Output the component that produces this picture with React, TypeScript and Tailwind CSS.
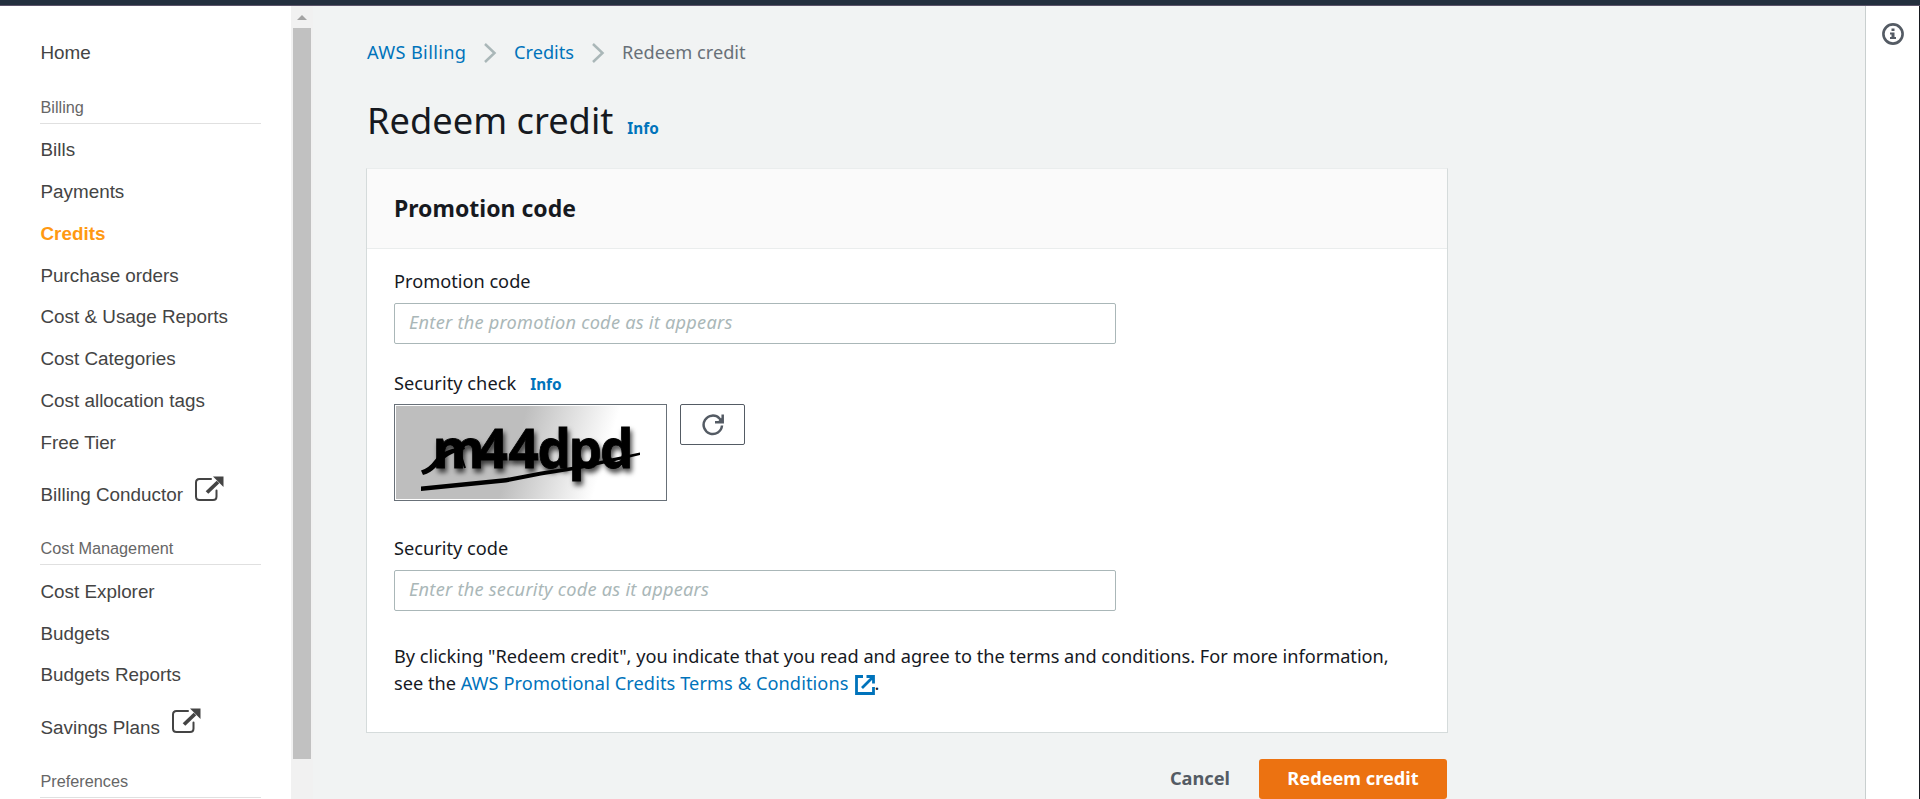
import React from "react";

const ember = "font-['Noto_Sans','Open_Sans',sans-serif]";

function NavExternal() {
  return (
    <svg className="ml-[11.5px] mt-[3px] h-[26px] w-[30px] shrink-0" viewBox="0 0 30 26" fill="none">
      <path d="M17 3H5.500Q2 3 2 6.500V20.500Q2 24 5.500 24H19Q22.500 24 22.500 20.500V14.500" stroke="#444" strokeWidth="2" strokeLinecap="round" />
      <path d="M13 16.500L24 6" stroke="#444" strokeWidth="3.800" />
      <path d="M19 0.500H29.500V11Z" fill="#444" />
    </svg>
  );
}

function NavItem({ label, active, external }: { label: string; active?: boolean; external?: boolean }) {
  if (external) {
    return (
      <a className="flex h-[67.5px] items-start pl-[0.5px] pt-[9px] text-[18.85px] leading-6 text-[#444]">
        <span className="pt-[10.4px]">{label}</span>
        <NavExternal />
      </a>
    );
  }
  return (
    <a className={active ? "flex h-[41.8px] items-center pl-[0.5px] text-[18.85px] font-bold text-[#ff9912]" : "flex h-[41.8px] items-center pl-[0.5px] text-[18.85px] text-[#444]"}>
      {label}
    </a>
  );
}

function NavSection({ label }: { label: string }) {
  return <div className="flex h-[34px] w-[221px] items-start border-b border-[#e0e0e0] pl-[0.5px] text-[16.25px] leading-[34px] text-[#666]">{label}</div>;
}

function Chevron() {
  return (
    <svg className="h-5 w-[13px]" viewBox="0 0 13 20" fill="none" stroke="#aab7b8" strokeWidth="2.500">
      <path d="M1 1L10.500 10L1 19" />
    </svg>
  );
}

function Captcha() {
  return (
    <div className="h-[97px] w-[273px] border border-[#687078] bg-white p-px">
      <svg className="h-full w-full" viewBox="0 0 269 93">
        <defs>
          <linearGradient id="fade" gradientUnits="userSpaceOnUse" x1="122" y1="30" x2="212" y2="58">
            <stop offset="0" stopColor="#bebebe" />
            <stop offset="0.95" stopColor="#ffffff" />
          </linearGradient>
          <filter id="shade" x="-10%" y="-20%" width="120%" height="150%">
            <feDropShadow dx="2" dy="4" stdDeviation="2.500" floodColor="#000" floodOpacity="0.7" />
          </filter>
        </defs>
        <rect width="269" height="93" fill="url(#fade)" />
        <g filter="url(#shade)" className="font-['Open_Sans','Noto_Sans',sans-serif]" fontWeight="700" fontSize="53" stroke="#000" strokeWidth="0.800">
          <text x="36.500 81.500 112.500 141.500 172.500 204" y="61.500">m44dpd</text>
        </g>
        <path d="M25 64.500Q33 62 38 55C46 45 54 43 62 42L68 40L69 43C60 46 54 48 48 53C42 58 38 66 27 69Z" fill="#000" />
        <path d="M62 42Q66 52 69 62" stroke="#000" strokeWidth="2" fill="none" />
        <path d="M25 80.500L110 72L145 65.500L182 60L215 52.500L244 46.500V49L215 56L182 63.500L145 69.500L110 76.500L25 85Z" fill="#000" />
      </svg>
    </div>
  );
}

function Field({ label, placeholder }: { label: string; placeholder: string }) {
  return (
    <label className="flex flex-col gap-2">
      <span className="h-7 text-[18.2px] leading-7">{label}</span>
      <input
        className="h-[41px] w-[722px] rounded-[2px] border border-[#aab7b8] bg-white px-[14px] pb-[3px] text-[18.2px] tracking-[0.24px] outline-none placeholder:italic placeholder:text-[#aab7b8]"
        placeholder={placeholder}
      />
    </label>
  );
}

export default function App() {
  return (
    <div className="flex h-[799px] w-[1920px] flex-col overflow-hidden bg-[#f1f3f3]">
      <div className="h-[6px] shrink-0 border-b border-[#5b5369] bg-[#232f3e]" />
      <div className="flex min-h-0 flex-1">
        <nav className="flex w-[291px] shrink-0 flex-col overflow-hidden bg-white pl-10 pt-[26px] font-['Liberation_Sans',Arial,sans-serif]">
          <NavItem label="Home" />
          <div className="h-[16px] shrink-0" />
          <NavSection label="Billing" />
          <div className="h-[5.6px] shrink-0" />
          <NavItem label="Bills" />
          <NavItem label="Payments" />
          <NavItem label="Credits" active />
          <NavItem label="Purchase orders" />
          <NavItem label="Cost & Usage Reports" />
          <NavItem label="Cost Categories" />
          <NavItem label="Cost allocation tags" />
          <NavItem label="Free Tier" />
          <NavItem label="Billing Conductor" external />
          <NavSection label="Cost Management" />
          <div className="h-[5.800px] shrink-0" />
          <NavItem label="Cost Explorer" />
          <NavItem label="Budgets" />
          <NavItem label="Budgets Reports" />
          <NavItem label="Savings Plans" external />
          <NavSection label="Preferences" />
        </nav>
        <div className="flex w-[22px] shrink-0 flex-col items-center bg-[#f1f1f1]">
          <div className="flex h-[22px] items-center">
            <svg className="h-[5px] w-[10px]" viewBox="0 0 10 5"><path d="M0 5L5 0L10 5Z" fill="#a3a3a3" /></svg>
          </div>
          <div className="h-[731px] w-[18px] bg-[#c1c1c1]" />
        </div>
        <main className={"flex flex-1 flex-col pl-[53px] text-[#16191f] " + ember}>
          <div className="mt-[33px] flex h-7 items-center pl-[1px] text-[18.2px]">
            <a className="w-[117px] whitespace-nowrap tracking-[0.35px] text-[#0073bb]">AWS Billing</a>
            <Chevron />
            <a className="ml-[17px] w-[78px] text-[#0073bb]">Credits</a>
            <Chevron />
            <span className="ml-[17px] text-[#687078]">Redeem credit</span>
          </div>
          <div className="mt-[28px] flex h-[50px] items-baseline pl-[1px]">
            <h1 className="text-[36.250px] leading-[50px]">Redeem credit</h1>
            <a className="ml-[14px] text-[15.300px] font-bold text-[#0073bb]">Info</a>
          </div>
          <section className="mt-[23px] h-[565px] w-[1082px] border border-[#d5dbdb] border-t-[#eaeded] bg-white">
            <div className="flex h-20 items-center border-b border-[#eaeded] bg-[#fafafa] pl-[27px]">
              <h2 className="text-[23px] font-bold">Promotion code</h2>
            </div>
            <div className="flex flex-col pl-[27px] pt-[18px]">
              <Field label="Promotion code" placeholder="Enter the promotion code as it appears" />
              <div className="mt-[25px] flex h-7 items-baseline">
                <span className="text-[18.2px] leading-7 tracking-[0.04px]">Security check</span>
                <a className="ml-[14px] text-[15.300px] font-bold text-[#0073bb]">Info</a>
              </div>
              <div className="mt-[7px] flex gap-[13px]">
                <Captcha />
                <button className="flex h-[41px] w-[65px] items-center justify-center rounded-[2px] border border-[#545b64] bg-white">
                  <svg className="h-[22px] w-[22px]" viewBox="0 0 22 22" fill="none" stroke="#545b64" strokeWidth="2.500">
                    <path d="M20 11.500A9.200 9.200 0 1 1 17.500 4.500L20 7.500" />
                    <path d="M20.700 0.500V8.300H13" />
                    <path d="M20.700 8.300H15L20.700 3Z" fill="#545b64" stroke="none" />
                  </svg>
                </button>
              </div>
              <div className="mt-[33px]">
                <Field label="Security code" placeholder="Enter the security code as it appears" />
              </div>
              <p className="mt-[32px] w-[1020px] text-[18.2px] leading-[27px] tracking-[-0.015px]">
                By clicking "Redeem credit", you indicate that you read and agree to the terms and conditions. For more information,
                <br />
                see the <a className="tracking-[0.08px] text-[#0073bb]">AWS Promotional Credits Terms &amp; Conditions
                <svg className="ml-[6px] inline-block h-5 w-5 align-[-5px]" viewBox="0 0 20 20" fill="none" stroke="#0073bb" strokeWidth="2.800">
                  <path d="M8 1.500H1.500V18.500H18.500V12M11.500 1.500H18.500V8.500M18 2L7 13" />
                </svg></a>.
              </p>
            </div>
          </section>
          <div className="mt-[26px] flex h-10 w-[1081px] items-center justify-end text-[18.2px] font-bold">
            <button className="mr-[29px] text-[#545b64]">Cancel</button>
            <button className="h-10 w-[188px] rounded-[3px] bg-[#ec7211] text-white">Redeem credit</button>
          </div>
        </main>
        <aside className="flex w-[55px] shrink-0 justify-center border-l border-r border-l-[#c9cfcf] border-r-[#16191f] bg-white pt-[17px]">
          <svg className="h-[22px] w-[22px]" viewBox="0 0 22 22" fill="none">
            <circle cx="11" cy="11" r="9.600" stroke="#545b64" strokeWidth="2.600" />
            <path d="M9.500 5.500H12.500V8H9.500ZM8 9.500H12.500V14H14V16H8V14H9.500V11.500H8Z" fill="#545b64" />
          </svg>
        </aside>
      </div>
    </div>
  );
}
